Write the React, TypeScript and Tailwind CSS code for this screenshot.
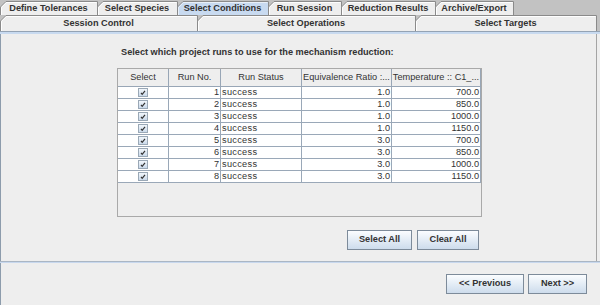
import React from "react";

const FONT = { fontFamily: '"Liberation Sans", Arial, sans-serif' };

function Tab({ w, h, label, selected }: { w: number; h: number; label: string; selected?: boolean }) {
  const fill = selected ? "#c8daf0" : "#eeeeee";
  return (
    <div className="relative flex-none flex items-center justify-center" style={{ width: w, height: h }}>
      <svg className="absolute left-0 top-0" width={w + 1} height={h} viewBox={`0 0 ${w + 1} ${h}`}>
        <path d={`M0.5 ${h} L0.5 6 L6 0.5 L${w + 0.5} 0.5 L${w + 0.5} ${h} Z`} fill={fill} stroke="none" />
        <path d={`M0.5 ${h} L0.5 6 L6 0.5 L${w + 0.5} 0.5 L${w + 0.5} ${h}`} fill="none" stroke="#8a8a8a" strokeWidth="1" />
        <path d={`M1.5 ${h} L1.5 6.4 L6.4 1.5 L${w - 0.5} 1.5`} fill="none" stroke="#ffffff" strokeOpacity={selected ? 0.6 : 0.9} strokeWidth="1" />
      </svg>
      <span className="relative text-[9.2px] font-bold text-[#333333] leading-none pt-[1px]">{label}</span>
    </div>
  );
}

function CheckBox() {
  return (
    <svg width="10" height="9" viewBox="0 0 10 9">
      <defs>
        <linearGradient id="cbg" x1="0" y1="0" x2="0" y2="1">
          <stop offset="0" stopColor="#f4f8fc" />
          <stop offset="1" stopColor="#c8d8ea" />
        </linearGradient>
      </defs>
      <rect x="0.5" y="0.5" width="9" height="8" fill="url(#cbg)" stroke="#9aa8b6" />
      <path d="M3 4.8 L4.2 6.3 L7 2.8" fill="none" stroke="#333" strokeWidth="1.2" />
    </svg>
  );
}

function Btn({ w, label }: { w: number; label: string }) {
  return (
    <div
      className="flex-none h-[20px] flex items-center justify-center border border-[#7d8b9a] bg-gradient-to-b from-[#fbfdff] to-[#cddcec] text-[9.2px] font-bold text-[#333333]"
      style={{ width: w }}
    >
      {label}
    </div>
  );
}

const rows = [
  [1, "1.0", "700.0"],
  [2, "1.0", "850.0"],
  [3, "1.0", "1000.0"],
  [4, "1.0", "1150.0"],
  [5, "3.0", "700.0"],
  [6, "3.0", "850.0"],
  [7, "3.0", "1000.0"],
  [8, "3.0", "1150.0"],
];

export default function App() {
  return (
    <div className="w-[600px] h-[305px] bg-[#eeeeee] flex flex-col overflow-hidden" style={FONT}>
      <div className="flex h-[15px] items-end bg-[#c2c2c2]">
        <Tab w={97} h={14} label="Define Tolerances" />
        <Tab w={80} h={14} label="Select Species" />
        <Tab w={91} h={14} label="Select Conditions" selected />
        <Tab w={73} h={14} label="Run Session" />
        <Tab w={94} h={14} label="Reduction Results" />
        <Tab w={78} h={14} label="Archive/Export" />
      </div>
      <div className="flex h-[16px] bg-[#c2c2c2]">
        <Tab w={197} h={16} label="Session Control" />
        <Tab w={218} h={16} label="Select Operations" />
        <Tab w={181} h={16} label="Select Targets" />
      </div>
      <div className="h-px bg-[#94a3b4]" />
      <div className="h-[2px] bg-[#c8daf0]" />

      <div className="h-[227px] flex-none border-l border-l-[#8d9cac] border-r border-r-[#a4a4a4] mr-[3px] flex flex-col pl-[116px]">
        <div className="pt-[13px] pl-[4px] h-[34px] text-[9.2px] font-bold text-[#333333] leading-[11px]">
          Select which project runs to use for the mechanism reduction:
        </div>
        <div className="w-[365px] h-[149px] border border-[#a9a9a9] bg-[#eeeeee] flex flex-col text-[9.2px] text-[#333333]">
          <div className="flex h-[18px] flex-none">
            {[
              ["Select", 51],
              ["Run No.", 52],
              ["Run Status", 81],
              ["Equivalence Ratio :...", 90],
              ["Temperature :: C1_...", 89],
            ].map(([t, w]) => (
              <div
                key={t as string}
                className="flex-none flex items-center justify-center border-r border-b border-[#98a6b6] bg-[#eeeeee] overflow-hidden whitespace-nowrap"
                style={{ width: w as number }}
              >
                {t}
              </div>
            ))}
          </div>
          {rows.map(([n, r, t]) => (
            <div key={n as number} className="flex h-[12px] flex-none bg-white leading-none">
              <div className="w-[51px] flex-none flex items-center justify-center border-r border-b border-[#9aa8b8]">
                <CheckBox />
              </div>
              <div className="w-[52px] flex-none flex items-center justify-end pr-[1px] border-r border-b border-[#9aa8b8]">{n}</div>
              <div className="w-[81px] flex-none flex items-center pl-[1px] border-r border-b border-[#9aa8b8] tracking-[0.3px]">success</div>
              <div className="w-[90px] flex-none flex items-center justify-end pr-[1px] border-r border-b border-[#9aa8b8]">{r}</div>
              <div className="w-[89px] flex-none flex items-center justify-end pr-[1px] border-r border-b border-[#9aa8b8]">{t}</div>
            </div>
          ))}
        </div>
        <div className="w-[365px] flex justify-end gap-[5px] pr-[3px] mt-[13px]">
          <Btn w={65} label="Select All" />
          <Btn w={62} label="Clear All" />
        </div>
      </div>
      <div className="h-px bg-[#aab6c4]" />
      <div className="h-px bg-[#c8d8ee]" />
      <div className="flex-1 border-l border-l-[#8d9cac] flex items-center justify-end gap-[4px] pr-[13px]">
        <Btn w={78} label="<< Previous" />
        <Btn w={59} label="Next >>" />
      </div>
    </div>
  );
}
